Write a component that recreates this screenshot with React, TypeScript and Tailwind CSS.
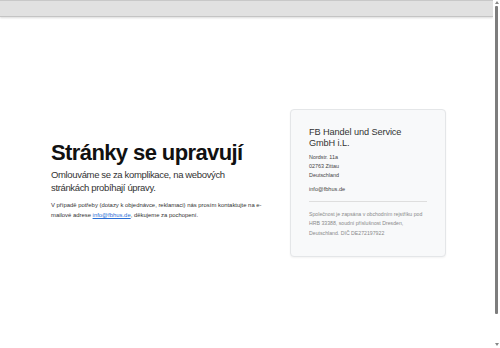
import React from "react";

const Scrollbar: React.FC = () => (
  <div className="w-[7px] h-full bg-white flex flex-col items-center">
    <div className="mt-[1px] w-0 h-0 border-l-[2px] border-r-[2px] border-b-[3px] border-l-transparent border-r-transparent border-b-[#888]" />
    <div className="mt-[2px] w-[3px] h-[308px] bg-[#7d7d7d] rounded-[1px]" />
    <div className="flex-1" />
    <div className="mb-[2px] w-0 h-0 border-l-[2px] border-r-[2px] border-t-[3px] border-l-transparent border-r-transparent border-t-[#888]" />
  </div>
);

export default function App() {
  return (
    <div className="w-[500px] h-[348px] flex bg-white overflow-hidden font-['Liberation_Sans',Arial,sans-serif]">
      <div className="flex-1 flex flex-col">
        <div className="h-[17px] bg-[#e1e1e1] border-t border-[#c8c8c8] border-b border-b-[#c4c4c4] shadow-[0_1px_2px_rgba(0,0,0,0.15)]" />
        <div className="flex-1 flex items-center pl-[51px]">
          <div className="w-[220px] flex flex-col mb-[5px]">
            <h1 className="text-[22px] leading-[24px] font-bold text-[#111] tracking-[-0.6px]">
              Stránky se upravují
            </h1>
            <p className="mt-[3px] text-[9.5px] leading-[13px] text-[#333] tracking-[-0.35px]">
              Omlouváme se za komplikace, na webových
              <br />
              stránkách probíhají úpravy.
            </p>
            <p className="mt-[6px] text-[5.9px] leading-[10px] text-[#333]">
              V případě potřeby (dotazy k objednávce, reklamaci) nás prosím kontaktujte na e-
              <br />
              mailové adrese{" "}
              <a href="#" className="text-[#2a6fd6] underline">
                info@fbhus.de
              </a>
              , děkujeme za pochopení.
            </p>
          </div>
          <div className="ml-[19px] w-[156px] h-[148px] bg-[#f8f9fa] border border-[#e4e6e8] rounded-[4px] shadow-[0_1px_2px_rgba(0,0,0,0.05)] px-[18px] pt-[17px] flex flex-col">
            <div className="text-[9.2px] leading-[11.5px] text-[#333] tracking-[-0.1px]">
              FB Handel und Service
              <br />
              GmbH i.L.
            </div>
            <div className="mt-[3px] text-[5.4px] leading-[9px] text-[#444]">
              Nordstr. 11a
              <br />
              02763 Zittau
              <br />
              Deutschland
            </div>
            <div className="mt-[5px] text-[5.6px] leading-[9px] text-[#444]">info@fbhus.de</div>
            <div className="mt-[7px] h-px bg-[#dedede]" />
            <div className="mt-[8px] text-[5.2px] leading-[9.5px] text-[#8a8a8a]">
              Společnost je zapsána v obchodním rejstříku pod
              <br />
              HRB 33388, soudní příslušnost Dresden,
              <br />
              Deutschland. DIČ DE272197922
            </div>
          </div>
        </div>
      </div>
      <Scrollbar />
    </div>
  );
}
